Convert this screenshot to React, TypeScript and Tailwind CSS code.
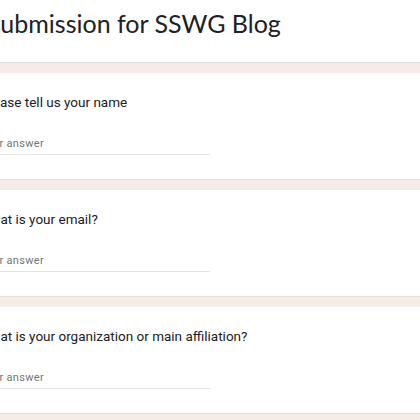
const questions = [
  "Please tell us your name",
  "What is your email?",
  "What is your organization or main affiliation?",
];

const Gap = () => (
  <div className="h-[11px] shrink-0 border-t border-[#e6e0de] bg-[#f5ece8]" />
);

const Question = ({ label }: { label: string }) => (
  <div className="h-[106px] shrink-0 bg-white pt-[18px]">
    <div className="-ml-[19px] text-[13.5px] leading-[22px] text-[#202124] font-['Roboto',sans-serif]">
      {label}
    </div>
    <div className="-ml-[20px] mt-[22px] w-[230px] border-b border-[#e4e4e4] pb-[1px] text-[11px] leading-[18px] tracking-[0.3px] text-[#70757a] font-['Roboto',sans-serif]">
      Your answer
    </div>
  </div>
);

export default function App() {
  return (
    <div className="flex h-[420px] w-[420px] flex-col overflow-hidden bg-white">
      <div className="h-[62px] shrink-0 pt-[5px]">
        <h1 className="-ml-[13px] text-[25px] leading-[36px] text-[#202124] font-['Lato',sans-serif]">
          Submission for SSWG Blog
        </h1>
      </div>
      {questions.map((q) => (
        <div key={q} className="flex flex-col">
          <Gap />
          <Question label={q} />
        </div>
      ))}
      <Gap />
    </div>
  );
}
